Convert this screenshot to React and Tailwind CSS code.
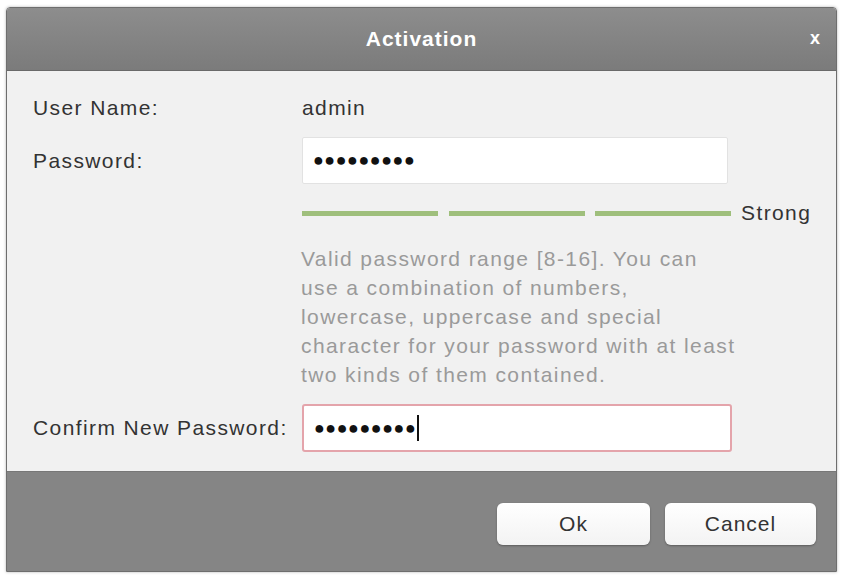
export default function App() {
  const font = { fontFamily: '"Liberation Sans", Arial, sans-serif' };
  return (
    <div className="w-[843px] h-[576px] bg-white pt-[7px] pl-[6px]" style={font}>
      <div className="w-[831px] h-[565px] flex flex-col rounded-t-[4px] overflow-hidden border border-[#6e6e6e] shadow-[0_0_3px_rgba(0,0,0,0.3)]">
        {/* title bar */}
        <div className="h-[63px] shrink-0 relative flex items-center justify-center bg-gradient-to-b from-[#8d8d8d] to-[#7b7b7b] border-b border-[#6a6a6a]">
          <span className="text-white font-bold text-[21px] tracking-[1px]">Activation</span>
          <span className="absolute right-[16px] top-[21px] text-white font-bold text-[18px] leading-none">x</span>
        </div>
        {/* body */}
        <div className="h-[400px] shrink-0 bg-[#f1f1f1] flex flex-col pl-[26px] text-[#333] text-[21px] tracking-[1.4px]">
          <div className="flex items-center h-[26px] mt-[24px]">
            <span className="w-[269px]">User Name:</span>
            <span>admin</span>
          </div>
          <div className="flex items-center mt-[16px]">
            <span className="w-[269px]">Password:</span>
            <div className="w-[426px] h-[47px] bg-white border border-[#e2e2e2] rounded-[2px] flex items-center pl-[10px] text-[#111] text-[18px] tracking-[0.5px]">
              ●●●●●●●●●
            </div>
          </div>
          <div className="flex items-center ml-[269px] mt-[20px] h-[18px]">
            <div className="w-[136px] h-[5px] bg-[#9fbf7c]" />
            <div className="w-[136px] h-[5px] bg-[#9fbf7c] ml-[11px]" />
            <div className="w-[136px] h-[5px] bg-[#9fbf7c] ml-[10px]" />
            <span className="ml-[10px]">Strong</span>
          </div>
          <div className="ml-[268px] mt-[22px] w-[470px] text-[#9a9a9a] leading-[29px]">
            Valid password range [8-16]. You can<br />
            use a combination of numbers,<br />
            lowercase, uppercase and special<br />
            character for your password with at least<br />
            two kinds of them contained.
          </div>
          <div className="flex items-center mt-[15px]">
            <span className="w-[269px]">Confirm New Password:</span>
            <div className="w-[430px] h-[48px] bg-white border-2 border-[#e4a4ab] rounded-[3px] flex items-center pl-[10px] text-[#111] text-[18px] tracking-[0.5px]">
              ●●●●●●●●●<span className="inline-block w-[2px] h-[26px] bg-[#111] ml-[1px]" />
            </div>
          </div>
        </div>
        {/* footer */}
        <div className="flex-1 bg-[#858585] border-t border-[#777] flex justify-end items-start pt-[31px] pr-[20px] gap-[15px]">
          <button className="w-[153px] h-[42px] rounded-[6px] bg-gradient-to-b from-white to-[#f3f3f3] text-[#333] text-[21px] tracking-[1px] shadow-[0_1px_2px_rgba(0,0,0,0.3)]">Ok</button>
          <button className="w-[151px] h-[42px] rounded-[6px] bg-gradient-to-b from-white to-[#f3f3f3] text-[#333] text-[21px] tracking-[1px] shadow-[0_1px_2px_rgba(0,0,0,0.3)]">Cancel</button>
        </div>
      </div>
    </div>
  );
}
